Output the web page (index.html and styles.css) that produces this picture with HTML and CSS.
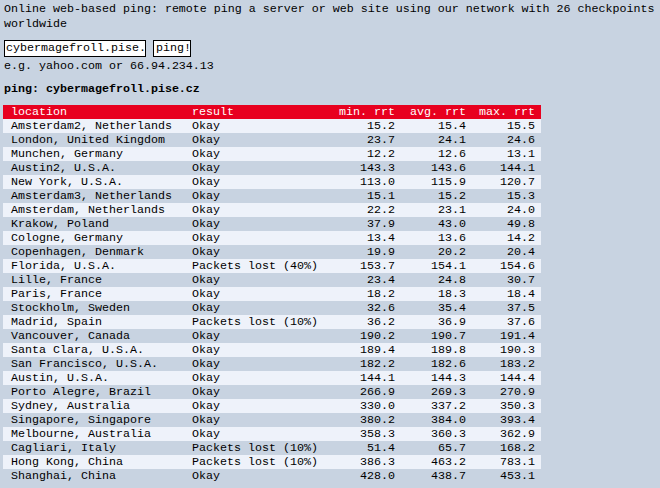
FILE: index.html
```html
<!DOCTYPE html>
<html>
<head>
<meta charset="utf-8">
<link rel="stylesheet" href="styles.css">
</head>
<body>
<p class="intro">Online web-based ping: remote ping a server or web site using our network with 26 checkpoints worldwide</p>
<form class="form">
  <div class="row">
    <span class="field">cybermagefroll.pise.</span>
    <button type="button" class="btn">ping!</button>
  </div>
  <div class="hint">e.g. yahoo.com or 66.94.234.13</div>
</form>
<h2 class="title">ping: cybermagefroll.pise.cz</h2>
<table class="results">
  <colgroup><col class="c1"><col class="c2"><col class="c3"><col class="c4"><col class="c5"></colgroup>
  <thead>
    <tr><th class="l">location</th><th class="l">result</th><th class="n">min. rrt</th><th class="n">avg. rrt</th><th class="n">max. rrt</th></tr>
  </thead>
  <tbody>
    <tr><td>Amsterdam2, Netherlands</td><td>Okay</td><td class="n">15.2</td><td class="n">15.4</td><td class="n">15.5</td></tr>
    <tr><td>London, United Kingdom</td><td>Okay</td><td class="n">23.7</td><td class="n">24.1</td><td class="n">24.6</td></tr>
    <tr><td>Munchen, Germany</td><td>Okay</td><td class="n">12.2</td><td class="n">12.6</td><td class="n">13.1</td></tr>
    <tr><td>Austin2, U.S.A.</td><td>Okay</td><td class="n">143.3</td><td class="n">143.6</td><td class="n">144.1</td></tr>
    <tr><td>New York, U.S.A.</td><td>Okay</td><td class="n">113.0</td><td class="n">115.9</td><td class="n">120.7</td></tr>
    <tr><td>Amsterdam3, Netherlands</td><td>Okay</td><td class="n">15.1</td><td class="n">15.2</td><td class="n">15.3</td></tr>
    <tr><td>Amsterdam, Netherlands</td><td>Okay</td><td class="n">22.2</td><td class="n">23.1</td><td class="n">24.0</td></tr>
    <tr><td>Krakow, Poland</td><td>Okay</td><td class="n">37.9</td><td class="n">43.0</td><td class="n">49.8</td></tr>
    <tr><td>Cologne, Germany</td><td>Okay</td><td class="n">13.4</td><td class="n">13.6</td><td class="n">14.2</td></tr>
    <tr><td>Copenhagen, Denmark</td><td>Okay</td><td class="n">19.9</td><td class="n">20.2</td><td class="n">20.4</td></tr>
    <tr><td>Florida, U.S.A.</td><td>Packets lost (40%)</td><td class="n">153.7</td><td class="n">154.1</td><td class="n">154.6</td></tr>
    <tr><td>Lille, France</td><td>Okay</td><td class="n">23.4</td><td class="n">24.8</td><td class="n">30.7</td></tr>
    <tr><td>Paris, France</td><td>Okay</td><td class="n">18.2</td><td class="n">18.3</td><td class="n">18.4</td></tr>
    <tr><td>Stockholm, Sweden</td><td>Okay</td><td class="n">32.6</td><td class="n">35.4</td><td class="n">37.5</td></tr>
    <tr><td>Madrid, Spain</td><td>Packets lost (10%)</td><td class="n">36.2</td><td class="n">36.9</td><td class="n">37.6</td></tr>
    <tr><td>Vancouver, Canada</td><td>Okay</td><td class="n">190.2</td><td class="n">190.7</td><td class="n">191.4</td></tr>
    <tr><td>Santa Clara, U.S.A.</td><td>Okay</td><td class="n">189.4</td><td class="n">189.8</td><td class="n">190.3</td></tr>
    <tr><td>San Francisco, U.S.A.</td><td>Okay</td><td class="n">182.2</td><td class="n">182.6</td><td class="n">183.2</td></tr>
    <tr><td>Austin, U.S.A.</td><td>Okay</td><td class="n">144.1</td><td class="n">144.3</td><td class="n">144.4</td></tr>
    <tr><td>Porto Alegre, Brazil</td><td>Okay</td><td class="n">266.9</td><td class="n">269.3</td><td class="n">270.9</td></tr>
    <tr><td>Sydney, Australia</td><td>Okay</td><td class="n">330.0</td><td class="n">337.2</td><td class="n">350.3</td></tr>
    <tr><td>Singapore, Singapore</td><td>Okay</td><td class="n">380.2</td><td class="n">384.0</td><td class="n">393.4</td></tr>
    <tr><td>Melbourne, Australia</td><td>Okay</td><td class="n">358.3</td><td class="n">360.3</td><td class="n">362.9</td></tr>
    <tr><td>Cagliari, Italy</td><td>Packets lost (10%)</td><td class="n">51.4</td><td class="n">65.7</td><td class="n">168.2</td></tr>
    <tr><td>Hong Kong, China</td><td>Packets lost (10%)</td><td class="n">386.3</td><td class="n">463.2</td><td class="n">783.1</td></tr>
    <tr><td>Shanghai, China</td><td>Okay</td><td class="n">428.0</td><td class="n">438.7</td><td class="n">453.1</td></tr>
  </tbody>
</table>
</body>
</html>
```

FILE: styles.css
```css
html, body {
  margin: 0;
  background: #c8d3e1;
}
body {
  padding: 2px 4px 0 4px;
  font-family: "Liberation Mono", "Courier New", monospace;
  font-size: 11.67px;
  line-height: 15px;
  color: #000;
}
.intro {
  margin: 0;
  width: 652px;
}
.form {
  margin: 8px 0 0 0;
}
.row {
  display: flex;
  gap: 7px;
  align-items: center;
}
.field, .btn {
  display: block;
  background: #fff;
  border: 1px solid #000;
  font: inherit;
  color: #000;
  height: 17px;
  line-height: 15px;
  box-sizing: border-box;
  padding: 0 1px;
  margin: 0;
}
.field {
  width: 142px;
}
.btn {
  width: 38px;
  padding: 0 2px;
  text-align: left;
}
.hint {
  line-height: 14px;
  margin-top: 2px;
}
.title {
  margin: 9px 0 0 0;
  font-size: 11.67px;
  font-weight: bold;
  line-height: 14px;
}
.results {
  margin: 9px 0 0 -1px;
  border-collapse: collapse;
  width: 538px;
  table-layout: fixed;
}
.c1 { width: 181px; }
.c2 { width: 146px; }
.c3 { width: 71px; }
.c4 { width: 71px; }
.c5 { width: 69px; }
.results th, .results td {
  height: 14px;
  line-height: 14px;
  padding: 0;
  white-space: nowrap;
  overflow: hidden;
}
.results th {
  background: #e8001f;
  color: #fff;
  font-weight: normal;
}
.results td:first-child, .results th:first-child {
  padding-left: 8px;
}
.results td:nth-child(2), .results th:nth-child(2) {
  padding-left: 8px;
}
.results .l { text-align: left; }
.results .n {
  text-align: right;
  padding-right: 6px;
}
.results tbody tr:nth-child(odd) {
  background: #eef2fa;
}
.results tbody tr:nth-child(even) {
  background: #c8d3e1;
}
```
